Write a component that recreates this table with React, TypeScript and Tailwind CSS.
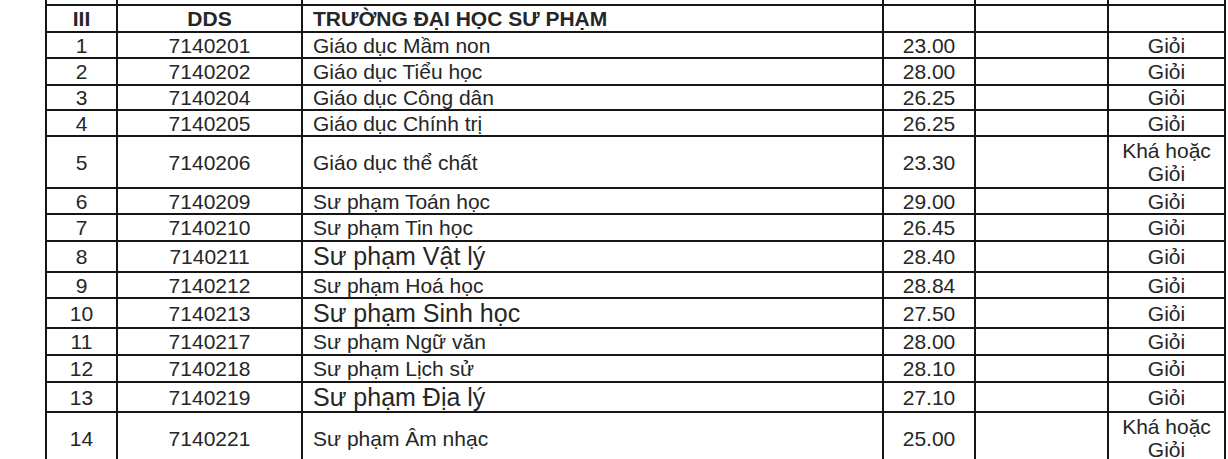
import React from 'react';

type Row = { stt: string; code: string; name: string; score: string; rank: string; big?: boolean; tall?: boolean };

const rows: Row[] = [
  { stt: '1', code: '7140201', name: 'Giáo dục Mầm non', score: '23.00', rank: 'Giỏi' },
  { stt: '2', code: '7140202', name: 'Giáo dục Tiểu học', score: '28.00', rank: 'Giỏi' },
  { stt: '3', code: '7140204', name: 'Giáo dục Công dân', score: '26.25', rank: 'Giỏi' },
  { stt: '4', code: '7140205', name: 'Giáo dục Chính trị', score: '26.25', rank: 'Giỏi' },
  { stt: '5', code: '7140206', name: 'Giáo dục thể chất', score: '23.30', rank: 'Khá hoặc Giỏi', tall: true },
  { stt: '6', code: '7140209', name: 'Sư phạm Toán học', score: '29.00', rank: 'Giỏi' },
  { stt: '7', code: '7140210', name: 'Sư phạm Tin học', score: '26.45', rank: 'Giỏi' },
  { stt: '8', code: '7140211', name: 'Sư phạm Vật lý', score: '28.40', rank: 'Giỏi', big: true },
  { stt: '9', code: '7140212', name: 'Sư phạm Hoá học', score: '28.84', rank: 'Giỏi' },
  { stt: '10', code: '7140213', name: 'Sư phạm Sinh học', score: '27.50', rank: 'Giỏi', big: true },
  { stt: '11', code: '7140217', name: 'Sư phạm Ngữ văn', score: '28.00', rank: 'Giỏi' },
  { stt: '12', code: '7140218', name: 'Sư phạm Lịch sử', score: '28.10', rank: 'Giỏi' },
  { stt: '13', code: '7140219', name: 'Sư phạm Địa lý', score: '27.10', rank: 'Giỏi', big: true },
  { stt: '14', code: '7140221', name: 'Sư phạm Âm nhạc', score: '25.00', rank: 'Khá hoặc Giỏi', tall: true },
];

// chiều cao từng hàng (px), đo theo ảnh
const heights = [26, 27, 25, 26, 52, 26, 27, 31, 26, 30, 27, 27, 30, 52];

const td = 'border-2 border-[#161616] p-0';

export default function App() {
  return (
    <div className="h-[459px] w-[1228px] overflow-hidden bg-white font-['Liberation_Sans',Arial,sans-serif] text-[21px] text-[#262626]">
      <table className="ml-[45px] mt-[-26px] w-[1179px] table-fixed border-collapse leading-[23px]">
        <colgroup>
          <col className="w-[71px]" />
          <col className="w-[185px]" />
          <col className="w-[581px]" />
          <col className="w-[92px]" />
          <col className="w-[133px]" />
          <col className="w-[117px]" />
        </colgroup>
        <tbody>
          <tr className="h-[30px]">
            <td className={td}></td>
            <td className={td}></td>
            <td className={td}></td>
            <td className={td}></td>
            <td className={td}></td>
            <td className={td}></td>
          </tr>
          <tr className="h-[27px] font-bold">
            <td className={`${td} text-center`}>III</td>
            <td className={`${td} text-center`}>DDS</td>
            <td className={`${td} pl-[10px]`}>TRƯỜNG ĐẠI HỌC SƯ PHẠM</td>
            <td className={td}></td>
            <td className={td}></td>
            <td className={td}></td>
          </tr>
          {rows.map((r, i) => (
            <tr key={r.stt} style={{ height: heights[i] }}>
              <td className={`${td} text-center`}>{r.stt}</td>
              <td className={`${td} text-center`}>{r.code}</td>
              <td className={`${td} pl-[10px] ${r.big ? 'text-[25px]' : ''}`}>{r.name}</td>
              <td className={`${td} text-center`}>{r.score}</td>
              <td className={td}></td>
              <td className={`${td} text-center`}>
                {r.tall ? (
                  <>
                    Khá hoặc
                    <br />
                    Giỏi
                  </>
                ) : (
                  r.rank
                )}
              </td>
            </tr>
          ))}
        </tbody>
      </table>
    </div>
  );
}
